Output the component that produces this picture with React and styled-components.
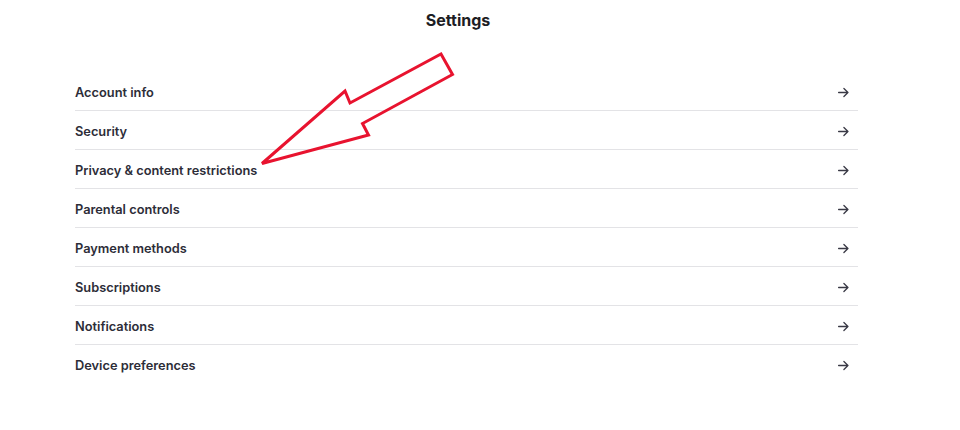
import React from 'react'
import styled, { createGlobalStyle } from 'styled-components'

const GlobalStyle = createGlobalStyle`
  body {
    margin: 0;
    background: #ffffff;
    font-family: Inter, "Noto Sans", sans-serif;
  }
`

const Page = styled.div`
  position: relative;
  width: 960px;
  height: 430px;
  overflow: hidden;
`

const Title = styled.h1`
  margin: 0;
  height: 72px;
  padding-top: 10px;
  box-sizing: border-box;
  width: 916px;
  text-align: center;
  font-size: 16px;
  font-weight: 700;
  color: #1d1d24;
`

const List = styled.ul`
  list-style: none;
  margin: 0 0 0 75px;
  padding: 0;
  width: 783px;
`

const Row = styled.li`
  display: flex;
  align-items: center;
  justify-content: space-between;
  box-sizing: content-box;
  height: 36px;
  padding-top: 2px;
  border-bottom: ${( { last } ) => ( last ? 'none' : '1px solid #e3e3e6' )};
  font-size: 12.8px;
  font-weight: 600;
  color: #2d2d38;
`

const Chevron = styled.svg`
  width: 13px;
  height: 13px;
  margin-right: 8px;
  color: #3a3a46;
`

const Pointer = styled.svg`
  position: absolute;
  left: 0;
  top: 0;
  pointer-events: none;
`

const items = [
  'Account info',
  'Security',
  'Privacy & content restrictions',
  'Parental controls',
  'Payment methods',
  'Subscriptions',
  'Notifications',
  'Device preferences',
]

const ArrowRight = () => (
  <Chevron viewBox="0 0 16 16" fill="none" stroke="currentColor" strokeWidth="1.6" strokeLinecap="round" strokeLinejoin="round">
    <path d="M2 8h11.5M8.5 3l5 5-5 5" />
  </Chevron>
)

const App = () => (
  <Page>
    <GlobalStyle />
    <Title>Settings</Title>
    <List>
      {items.map( ( label, i ) => (
        <Row key={label} last={i === items.length - 1}>
          <span>{label}</span>
          <ArrowRight />
        </Row>
      ) )}
    </List>

    <Pointer width="960" height="430" viewBox="0 0 960 430">
      <polygon
        points="262,163.5 345,91 350,103 441,54 452.5,74.5 362.5,123.5 368.5,135"
        fill="none"
        stroke="#e8132f"
        strokeWidth="3"
        strokeLinejoin="miter"
      />
    </Pointer>
  </Page>
)

export default App
